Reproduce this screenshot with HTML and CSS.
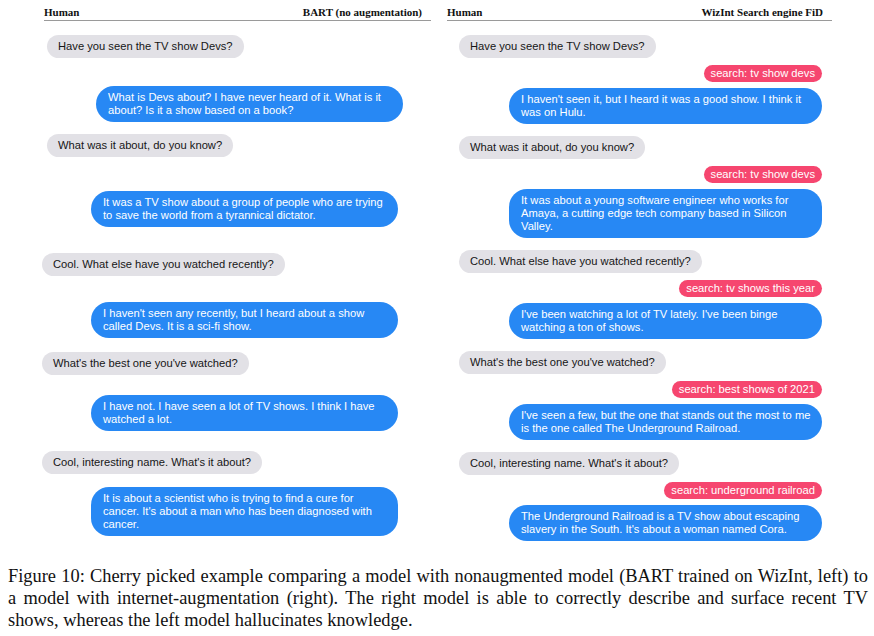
FILE: index.html
```html
<!DOCTYPE html>
<html lang="en">
<head>
<meta charset="utf-8">
<title>Figure 10</title>
<link rel="stylesheet" href="styles.css">
</head>
<body>
<div class="figure">
  <div class="panels">
    <section class="panel panel-left">
      <header class="panel-head"><span>Human</span><span>BART (no augmentation)</span></header>
      <div class="thread">
        <div class="msg human mt-14 in-3">Have you seen the TV show Devs?</div>
        <div class="msg bot mt-28 out-28">What is Devs about? I have never heard of it. What is it<br>about? Is it a show based on a book?</div>
        <div class="msg human mt-12 in-3">What was it about, do you know?</div>
        <div class="msg bot mt-34">It was a TV show about a group of people who are trying<br>to save the world from a tyrannical dictator.</div>
        <div class="msg human mt-26">Cool. What else have you watched recently?</div>
        <div class="msg bot mt-26">I haven't seen any recently, but I heard about a show<br>called Devs. It is a sci-fi show.</div>
        <div class="msg human mt-14">What's the best one you've watched?</div>
        <div class="msg bot mt-20">I have not. I have seen a lot of TV shows. I think I have<br>watched a lot.</div>
        <div class="msg human mt-20">Cool, interesting name. What's it about?</div>
        <div class="msg bot mt-13">It is about a scientist who is trying to find a cure for<br>cancer. It's about a man who has been diagnosed with<br>cancer.</div>
      </div>
    </section>
    <section class="panel panel-right">
      <header class="panel-head"><span>Human</span><span>WizInt Search engine FiD</span></header>
      <div class="thread">
        <div class="msg human first">Have you seen the TV show Devs?</div>
        <div class="search">search: tv show devs</div>
        <div class="msg bot">I haven't seen it, but I heard it was a good show. I think it<br>was on Hulu.</div>
        <div class="msg human">What was it about, do you know?</div>
        <div class="search">search: tv show devs</div>
        <div class="msg bot">It was about a young software engineer who works for<br>Amaya, a cutting edge tech company based in Silicon<br>Valley.</div>
        <div class="msg human">Cool. What else have you watched recently?</div>
        <div class="search">search: tv shows this year</div>
        <div class="msg bot">I've been watching a lot of TV lately. I've been binge<br>watching a ton of shows.</div>
        <div class="msg human">What's the best one you've watched?</div>
        <div class="search">search: best shows of 2021</div>
        <div class="msg bot">I've seen a few, but the one that stands out the most to me<br>is the one called The Underground Railroad.</div>
        <div class="msg human">Cool, interesting name. What's it about?</div>
        <div class="search">search: underground railroad</div>
        <div class="msg bot">The Underground Railroad is a TV show about escaping<br>slavery in the South. It's about a woman named Cora.</div>
      </div>
    </section>
  </div>
  <p class="caption">Figure 10: Cherry picked example comparing a model with nonaugmented model (BART trained on WizInt, left) to a model with internet-augmentation (right). The right model is able to correctly describe and surface recent TV shows, whereas the left model hallucinates knowledge.</p>
</div>
</body>
</html>
```
FILE: styles.css
```css
html, body {
  margin: 0;
  padding: 0;
  background: #ffffff;
}

.figure {
  width: 874px;
}

.panels {
  display: flex;
  align-items: flex-start;
  gap: 16px;
  padding-left: 44px;
}

.panel-left { width: 387px; }
.panel-right { width: 385px; }

.panel-head {
  display: flex;
  justify-content: space-between;
  font-family: "Liberation Serif", "Times New Roman", serif;
  font-weight: bold;
  font-size: 11px;
  line-height: 12px;
  color: #111;
  padding: 6px 9px 2px 0;
  border-bottom: 1px solid #9a9a9a;
}

.thread {
  display: flex;
  flex-direction: column;
  align-items: flex-start;
}

.msg {
  font-family: "Liberation Sans", Arial, Helvetica, sans-serif;
  font-size: 11.2px;
  line-height: 13px;
  box-sizing: border-box;
  white-space: nowrap;
}

.human {
  background: #e2e1e6;
  color: #161616;
  padding: 5px 11px;
  border-radius: 12px;
  margin-left: -2px;
}

.bot {
  align-self: flex-end;
  background: #2788f4;
  color: #ffffff;
  padding: 5px 6px 5px 12px;
  border-radius: 18px;
}

.panel-left .bot {
  width: 307px;
  margin-right: 33px;
}

.panel-right .bot {
  width: 313px;
  margin-right: 10px;
  margin-top: 6px;
}

.panel-right .human {
  margin-left: 12px;
  margin-top: 12px;
}

.panel-right .human.first { margin-top: 14px; }

.search {
  align-self: flex-end;
  margin-top: 7px;
  margin-right: 10px;
  background: #f6466f;
  color: #ffffff;
  font-family: "Liberation Sans", Arial, Helvetica, sans-serif;
  font-size: 11.2px;
  line-height: 13px;
  padding: 2px 7px;
  border-radius: 9px;
  white-space: nowrap;
}

.in-3 { margin-left: 3px; }
.panel-left .out-28 { margin-right: 28px; }

.mt-12 { margin-top: 12px; }
.mt-13 { margin-top: 13px; }
.mt-14 { margin-top: 14px; }
.mt-20 { margin-top: 20px; }
.mt-26 { margin-top: 26px; }
.mt-28 { margin-top: 28px; }
.mt-34 { margin-top: 34px; }

.caption {
  margin: 24px 0 0;
  padding: 0 6px 0 8px;
  font-family: "Liberation Serif", "Times New Roman", serif;
  font-size: 18.4px;
  line-height: 22px;
  color: #111;
  text-align: justify;
}
```
